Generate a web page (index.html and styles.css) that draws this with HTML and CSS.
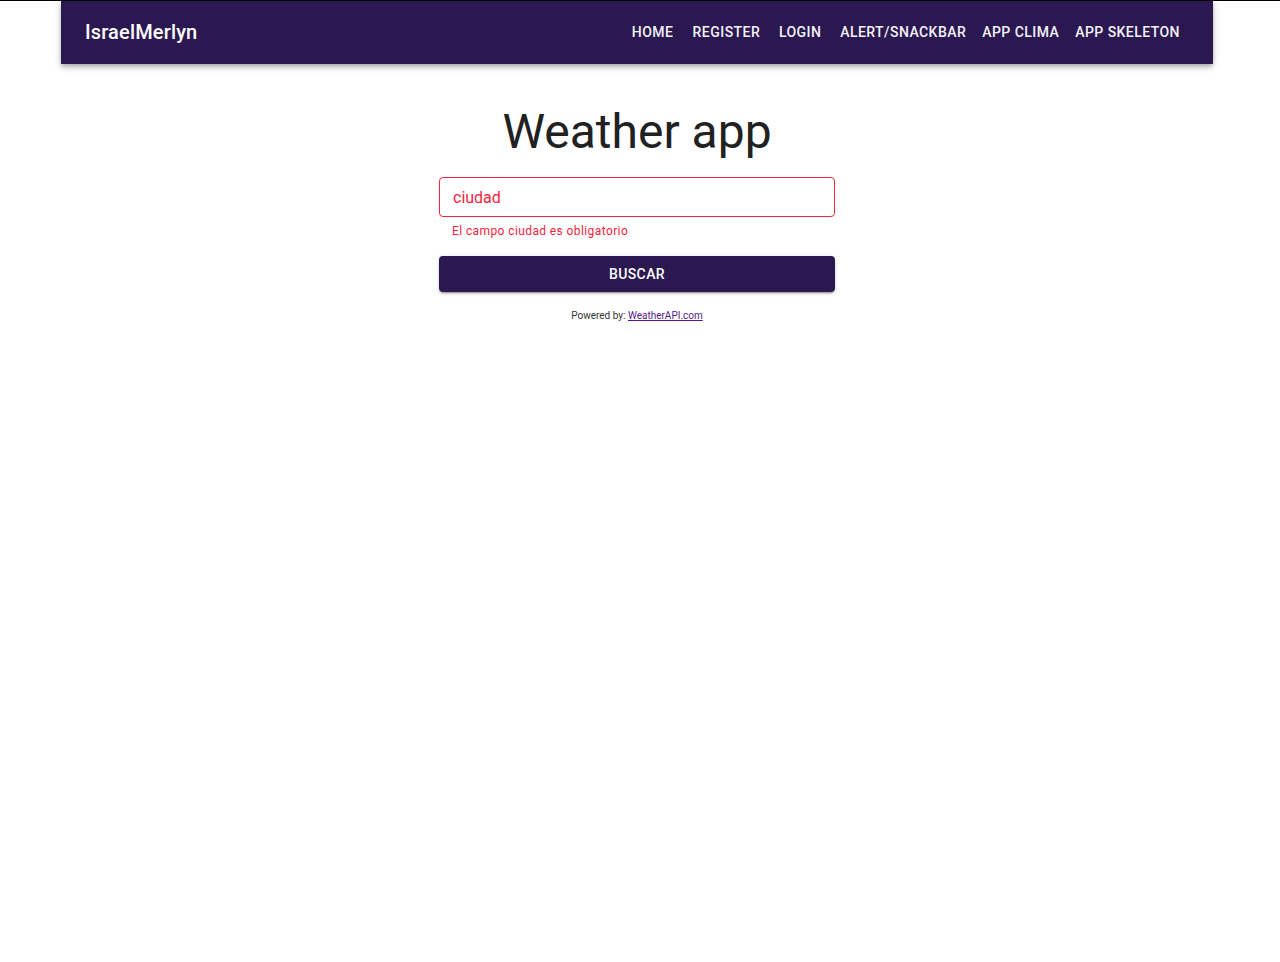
FILE: index.html
```html
<!DOCTYPE html>
<html lang="es">
<head>
<meta charset="utf-8">
<title>Weather app</title>
<link rel="stylesheet" href="styles.css">
</head>
<body>
<div class="page">
  <header class="navbar">
    <span class="brand">IsraelMerlyn</span>
    <nav class="nav">
      <a class="nav-btn">HOME</a>
      <a class="nav-btn">REGISTER</a>
      <a class="nav-btn">LOGIN</a>
      <a class="nav-btn">ALERT/SNACKBAR</a>
      <a class="nav-btn">APP CLIMA</a>
      <a class="nav-btn">APP SKELETON</a>
    </nav>
  </header>
  <main class="content">
    <h1 class="title">Weather app</h1>
    <form class="form">
      <div class="field">
        <input class="input" type="text" placeholder="ciudad">
      </div>
      <div class="error">El campo ciudad es obligatorio</div>
      <button class="btn" type="button">BUSCAR</button>
    </form>
    <p class="powered">Powered by: <a class="link" href="#">WeatherAPI.com</a></p>
  </main>
</div>
</body>
</html>
```

FILE: styles.css
```css
html, body {
  margin: 0;
  padding: 0;
  background: #ffffff;
}
body {
  border-top: 1px solid #000;
  font-family: Roboto, "Liberation Sans", sans-serif;
  color: #212121;
}
.page {
  width: 1274px;
  display: flex;
  flex-direction: column;
  align-items: center;
}
.navbar {
  width: 1152px;
  height: 63px;
  box-sizing: border-box;
  padding: 0 25px 0 24px;
  background: #2b1850;
  color: #fff;
  display: flex;
  align-items: center;
  justify-content: space-between;
  box-shadow: 0 2px 4px -1px rgba(0,0,0,.2), 0 4px 5px 0 rgba(0,0,0,.14), 0 1px 10px 0 rgba(0,0,0,.12);
}
.brand {
  font-size: 20px;
  font-weight: 500;
  letter-spacing: 0.15px;
  margin-top: -1px;
}
.nav {
  display: flex;
  align-items: center;
}
.nav-btn {
  min-width: 64px;
  height: 36px;
  box-sizing: border-box;
  padding: 0 8px;
  display: flex;
  align-items: center;
  justify-content: center;
  font-size: 14px;
  font-weight: 500;
  letter-spacing: 0.45px;
  color: #f4f2f7;
  white-space: nowrap;
  cursor: pointer;
  margin-top: -1px;
}
.content {
  width: 396px;
  display: flex;
  flex-direction: column;
  align-items: center;
}
.title {
  margin: 38px 0 0;
  font-size: 48px;
  font-weight: 400;
  line-height: 60px;
  color: #212121;
}
.form {
  width: 100%;
  margin-top: 15px;
  display: flex;
  flex-direction: column;
}
.field {
  width: 100%;
}
.input {
  width: 100%;
  height: 40px;
  box-sizing: border-box;
  border: 1px solid #f2243e;
  border-radius: 4px;
  padding: 0 13px;
  font-family: Roboto, "Liberation Sans", sans-serif;
  font-size: 16px;
  color: #f2243e;
  outline: none;
}
.input::placeholder {
  color: #f2243e;
  opacity: 1;
}
.error {
  padding: 6px 0 0 13px;
  font-size: 12px;
  line-height: 16px;
  letter-spacing: 0.4px;
  color: #f2243e;
}
.btn {
  margin-top: 17px;
  height: 36px;
  width: 100%;
  border: none;
  border-radius: 4px;
  background: #2b1850;
  color: #fff;
  font-family: Roboto, "Liberation Sans", sans-serif;
  font-size: 14px;
  font-weight: 500;
  letter-spacing: 0.4px;
  box-shadow: 0 3px 1px -2px rgba(0,0,0,.2), 0 2px 2px 0 rgba(0,0,0,.14), 0 1px 5px 0 rgba(0,0,0,.12);
  cursor: pointer;
}
.powered {
  margin: 17px 0 0;
  font-size: 10px;
  line-height: 14px;
  color: #333;
}
.link {
  color: #551a8b;
  text-decoration: underline;
}
```
